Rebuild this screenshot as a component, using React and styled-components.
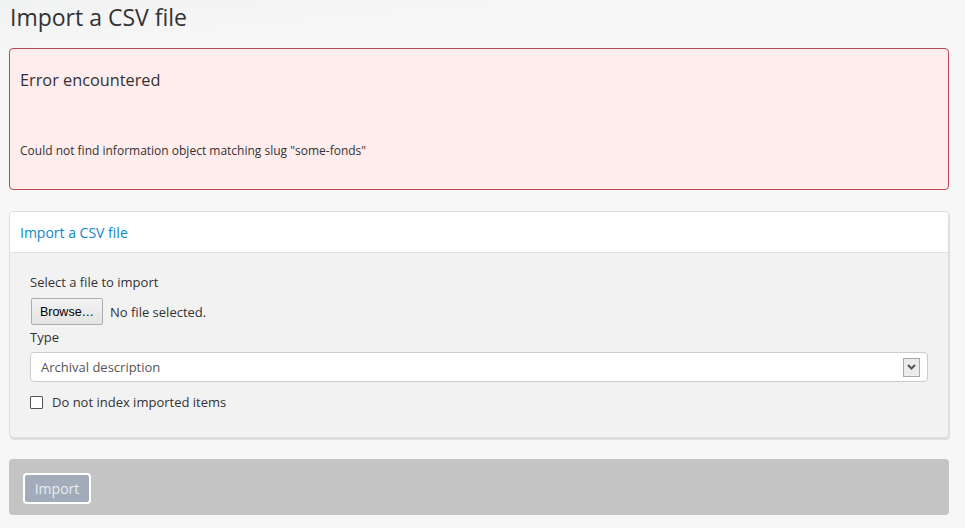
import React from 'react';
import styled, { createGlobalStyle } from 'styled-components';

const GlobalStyle = createGlobalStyle`
  html, body {
    margin: 0;
    padding: 0;
  }
  body {
    background: #f7f7f7;
    font-family: "Open Sans", "Liberation Sans", sans-serif;
    color: #333;
  }
`;

const App = () => {
  return (
    <>
      <GlobalStyle />
      <Page>
        <Title>Import a CSV file</Title>
        <ErrorBox>
          <ErrorTitle>Error encountered</ErrorTitle>
          <ErrorMessage>Could not find information object matching slug "some-fonds"</ErrorMessage>
        </ErrorBox>

        <Panel>
          <PanelHeader>Import a CSV file</PanelHeader>
          <PanelBody>
            <Label>Select a file to import</Label>
            <FileRow>
              <BrowseButton type="button">Browse…</BrowseButton>
              <FileName>No file selected.</FileName>
            </FileRow>
            <Label>Type</Label>
            <Select>
              <span>Archival description</span>
              <SelectArrow>
                <svg width="9" height="6" viewBox="0 0 9 6">
                  <path d="M1 1 L4.5 4.5 L8 1" stroke="#555" strokeWidth="2" fill="none" />
                </svg>
              </SelectArrow>
            </Select>
            <CheckRow>
              <CheckBox />
              <span>Do not index imported items</span>
            </CheckRow>
          </PanelBody>
        </Panel>

        <Actions>
          <ImportButton type="button">Import</ImportButton>
        </Actions>
      </Page>
    </>
  );
};

const Page = styled.div`
  min-height: 528px;
  box-sizing: border-box;
  padding: 0 16px 13px 9px;
  background: linear-gradient(175deg, #f1f2f2 0%, #f7f7f7 60px);
`;

const Title = styled.h1`
  margin: 0;
  padding: 3px 0 0 1px;
  font-size: 23px;
  font-weight: 400;
  line-height: 29px;
  color: #333;
  margin-bottom: 16px;
`;

const ErrorBox = styled.div`
  background: #ffecec;
  border: 1px solid #b94a56;
  border-radius: 4px;
  padding: 19px 10px 0;
  height: 121px;
  margin-bottom: 21px;
`;

const ErrorTitle = styled.div`
  font-size: 16.3px;
  line-height: 24px;
  color: #333;
  margin-bottom: 50px;
`;

const ErrorMessage = styled.div`
  font-size: 12px;
  line-height: 18px;
  color: #333;
`;

const Panel = styled.div`
  background: #f2f2f2;
  border: 1px solid #dedede;
  border-radius: 4px;
  box-shadow: 1px 2px 1px rgba(0, 0, 0, 0.1);
  overflow: hidden;
  margin-bottom: 21px;
`;

const PanelHeader = styled.div`
  background: #fff;
  border-bottom: 1px solid #e2e2e2;
  height: 40px;
  line-height: 41px;
  padding: 0 10px;
  font-size: 14px;
  color: #0f88c8;
`;

const PanelBody = styled.div`
  padding: 19px 20px 26px;
`;

const Label = styled.div`
  font-size: 13px;
  line-height: 20px;
  color: #333;
`;

const FileRow = styled.div`
  display: flex;
  align-items: center;
  gap: 7px;
  margin: 6px 0 2px 1px;
`;

const BrowseButton = styled.button`
  width: 72px;
  height: 27px;
  background: linear-gradient(#f3f3f3, #e3e3e3);
  border: 1px solid #adadad;
  border-radius: 2px;
  font-family: "Liberation Sans", Arial, sans-serif;
  font-size: 12.5px;
  color: #000;
  padding: 0;
`;

const FileName = styled.span`
  font-size: 13px;
  color: #333;
`;

const Select = styled.div`
  display: flex;
  align-items: center;
  justify-content: space-between;
  height: 28px;
  margin-top: 5px;
  background: #fff;
  border: 1px solid #ccc;
  border-radius: 4px;
  padding: 0 7px 0 10px;
  font-size: 13px;
  color: #555;
`;

const SelectArrow = styled.span`
  display: flex;
  align-items: center;
  justify-content: center;
  width: 15px;
  height: 17px;
  background: #ececec;
  border: 1px solid #a8a8a8;
`;

const CheckRow = styled.div`
  display: flex;
  align-items: center;
  gap: 9px;
  margin-top: 11px;
  font-size: 13px;
  color: #333;
`;

const CheckBox = styled.span`
  width: 11px;
  height: 11px;
  background: #fff;
  border: 1px solid #555;
  border-radius: 1px;
`;

const Actions = styled.div`
  background: #c4c4c4;
  border-radius: 4px;
  height: 56px;
  box-sizing: border-box;
  padding: 14px 14px 0;
  display: flex;
  align-items: flex-start;
`;

const ImportButton = styled.button`
  width: 68px;
  height: 31px;
  background: #a2acba;
  border: 2px solid #fff;
  border-radius: 4px;
  font-family: "Open Sans", sans-serif;
  font-size: 14px;
  color: #e8ecf0;
  padding: 0;
`;

export default App;
